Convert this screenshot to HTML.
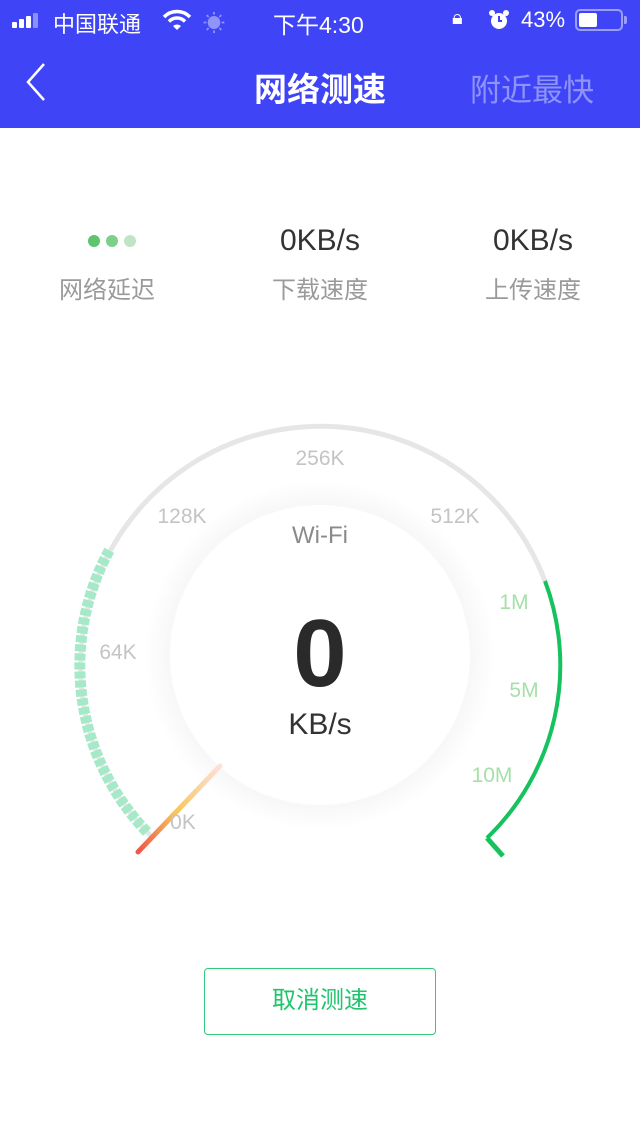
<!DOCTYPE html>
<html><head><meta charset="utf-8"><style>
*{margin:0;padding:0;box-sizing:border-box}
body{width:640px;height:1136px;background:#fff;position:relative;overflow:hidden;font-family:"Liberation Sans","Noto Sans CJK SC",sans-serif}
.nav{position:absolute;left:0;top:0;width:640px;height:128px;background:#3f45f7;color:#fff}
.abs{position:absolute;white-space:nowrap}
.c{transform:translateX(-50%)}
.lab{color:#9a9a9a;font-size:24px;top:270px}
.val{color:#333;font-size:30px;top:224px}
.btn{position:absolute;left:204px;top:968px;width:232px;height:67px;border:1.5px solid #2ecc7a;border-radius:4px;color:#1fc46c;font-size:24px;text-align:center;line-height:64px}
</style></head><body>
<div class="nav">
 <div class="abs" style="left:12px;top:14px;display:flex;align-items:flex-end;gap:2px;height:14px">
  <span style="width:5px;height:6px;background:#fff;border-radius:1px"></span><span style="width:5px;height:9px;background:#fff;border-radius:1px"></span><span style="width:5px;height:12px;background:#fff;border-radius:1px"></span><span style="width:5px;height:15px;background:#8c90fa;border-radius:1px"></span>
 </div>
 <div class="abs" style="left:53px;top:7px;font-size:22px">中国联通</div>
 <svg class="abs" style="left:162px;top:9px" width="30" height="22" viewBox="0 0 30 22"><path d="M2 8 A18 18 0 0 1 28 8" stroke="#fff" stroke-width="3.5" fill="none"/><path d="M7 12.5 A11 11 0 0 1 23 12.5" stroke="#fff" stroke-width="3.5" fill="none"/><path d="M11 17 L15 21 L19 17 A6 6 0 0 0 11 17Z" fill="#fff"/></svg>
 <div class="abs" style="left:203px;top:6px;font-size:22px;color:#9094fa">☀</div>
 <div class="abs" style="left:273px;top:6px;font-size:23px">下午4:30</div>
 <div class="abs" style="left:452px;top:7px;font-size:20px">🔒︎</div>
 <svg class="abs" style="left:488px;top:9px" width="22" height="22"><circle cx="11" cy="12" r="8" fill="#fff"/><path d="M11 7v5h3" stroke="#3f45f7" stroke-width="2" fill="none"/><circle cx="4" cy="4" r="3" fill="#fff"/><circle cx="18" cy="4" r="3" fill="#fff"/></svg>
 <div class="abs" style="left:521px;top:7px;font-size:22px">43%</div>
 <div class="abs" style="left:575px;top:9px;width:48px;height:22px;border:2px solid #9a9efa;border-radius:5px;padding:2px"><div style="width:18px;height:14px;background:#fff;border-radius:2px"></div></div>
 <div class="abs" style="left:624px;top:16px;width:3px;height:8px;background:#9a9efa;border-radius:0 2px 2px 0"></div>
 <svg class="abs" style="left:24px;top:62px" width="24" height="40"><path d="M20 2 L4 20 L20 38" stroke="#fff" stroke-width="2.5" fill="none"/></svg>
 <div class="abs c" style="left:320px;top:63px;font-size:33px;font-weight:bold">网络测速</div>
 <div class="abs" style="left:470px;top:65px;font-size:31px;color:#8e93fa">附近最快</div>
</div>

<div class="abs" style="left:88px;top:235px;display:flex;gap:6px">
 <span style="width:12px;height:12px;border-radius:50%;background:#5ec46e"></span><span style="width:12px;height:12px;border-radius:50%;background:#7dd08a"></span><span style="width:12px;height:12px;border-radius:50%;background:#bfe6c4"></span>
</div>
<div class="abs c lab" style="left:107px">网络延迟</div>
<div class="abs c val" style="left:320px">0KB/s</div>
<div class="abs c lab" style="left:320px">下载速度</div>
<div class="abs c val" style="left:533px">0KB/s</div>
<div class="abs c lab" style="left:533px">上传速度</div>

<svg class="abs" style="left:0;top:0" width="640" height="1136">
 <defs>
  <radialGradient id="sh" cx="320" cy="655" r="175" gradientUnits="userSpaceOnUse">
   <stop offset="0.8" stop-color="#f4f4f4"/><stop offset="1" stop-color="#fff"/>
  </radialGradient>
  <linearGradient id="nd" x1="140" y1="850" x2="220" y2="766" gradientUnits="userSpaceOnUse">
   <stop offset="0" stop-color="#ee5a4a"/><stop offset="0.45" stop-color="#f8c65a"/><stop offset="1" stop-color="#fde0dc"/>
  </linearGradient>
 </defs>
 <circle cx="320" cy="655" r="175" fill="url(#sh)"/>
 <circle cx="320" cy="655" r="150" fill="#fff"/>
 <path d="M153 838 A240 240 0 1 1 545 581" stroke="#e6e6e6" stroke-width="5" fill="none"/>
 <path d="M545 581 A240 240 0 0 1 487 838" stroke="#15c25e" stroke-width="4" fill="none"/>
 <path d="M487 838 L503 856" stroke="#15c25e" stroke-width="5" fill="none"/>
 <path d="M147 832 A240 240 0 0 1 110 549" stroke="#a6e9c8" stroke-width="11" stroke-dasharray="7 2" fill="none"/>
 <path d="M138 852 L220 766" stroke="url(#nd)" stroke-width="5" stroke-linecap="round"/>
 <g font-family="Liberation Sans,sans-serif" font-size="21" fill="#c4c4c4" text-anchor="middle">
  <text x="320" y="465">256K</text><text x="182" y="523">128K</text><text x="455" y="523">512K</text>
  <text x="118" y="659">64K</text><text x="183" y="829">0K</text>
 </g>
 <g font-family="Liberation Sans,sans-serif" font-size="21" fill="#a6e0a8" text-anchor="middle">
  <text x="514" y="609">1M</text><text x="524" y="697">5M</text><text x="492" y="782">10M</text>
 </g>
 <text x="320" y="543" font-family="Liberation Sans,sans-serif" font-size="24" fill="#8a8a8a" text-anchor="middle">Wi-Fi</text>
 <text x="320" y="686" font-family="Liberation Sans,sans-serif" font-size="96" font-weight="bold" fill="#2a2a2a" text-anchor="middle">0</text>
 <text x="320" y="734" font-family="Liberation Sans,sans-serif" font-size="30" fill="#333" text-anchor="middle">KB/s</text>
</svg>

<div class="btn">取消测速</div>
</body></html>
